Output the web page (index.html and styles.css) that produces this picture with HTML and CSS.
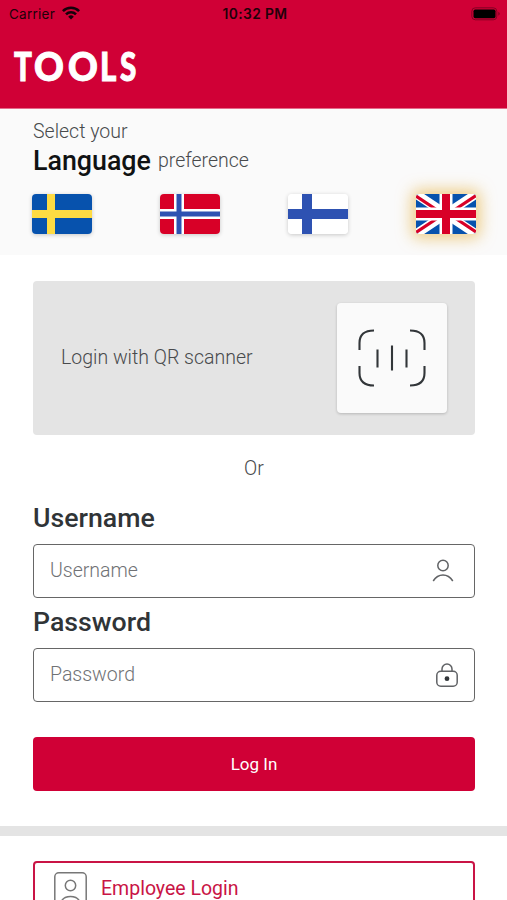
FILE: index.html
```html
<!DOCTYPE html>
<html lang="en">
<head>
<meta charset="utf-8">
<title>TOOLS Login</title>
<link rel="stylesheet" href="styles.css">
</head>
<body>
<header class="header">
  <div class="status">
    <span class="carrier">Carrier
      <svg width="18" height="14" viewBox="0 0 18 14"><g fill="none" stroke="#16000a" stroke-width="2.6"><path d="M.9 5.1a11.5 11.5 0 0 1 16.2 0"/><path d="M4 8.4a7 7 0 0 1 10 0"/></g><path d="M9 13.5 6.2 10.7a4 4 0 0 1 5.6 0z" fill="#16000a"/></svg>
    </span>
    <span class="time">10:32 PM</span>
    <svg class="battery" width="30" height="14" viewBox="0 0 30 14"><rect x=".8" y=".8" width="25" height="12" rx="3.5" fill="none" stroke="#830024"/><rect x="2.5" y="2.5" width="22" height="8.8" rx="1.7" fill="#000"/><path d="M27.3 4.8q3 2 0 4z" fill="#830024"/></svg>
  </div>
  <h1 class="logo"><span class="t">T</span><span class="o">O</span><span class="o">O</span><span class="l">L</span><span class="s">S</span></h1>
</header>
<section class="language">
  <p class="select">Select your</p>
  <p class="preference"><strong>Language</strong><span>preference</span></p>
  <div class="flags">
    <svg class="flag" viewBox="0 0 60 40"><path fill="#0752ad" d="M0 0h60v40H0z"/><path fill="#fedb43" d="M15 0h8v40h-8zM0 16h60v8H0z"/></svg>
    <svg class="flag" viewBox="0 0 60 40"><path fill="#d80027" d="M0 0h60v40H0z"/><path fill="#fff" d="M14 0h10v40H14zM0 15h60v10H0z"/><path fill="#2e52b2" d="M16.5 0h5v40h-5zM0 17.5h60v5H0z"/></svg>
    <svg class="flag" viewBox="0 0 60 40"><path fill="#fff" d="M0 0h60v40H0z"/><path fill="#2e52b2" d="M14 0h10v40H14zM0 15h60v10H0z"/></svg>
    <svg class="flag selected" viewBox="0 0 60 40"><path fill="#0752ad" d="M0 0h60v40H0z"/><path stroke="#fff" stroke-width="9" d="m0 0 60 40M60 0 0 40"/><path stroke="#d80027" stroke-width="3.2" d="m0 2 27 18M60 1.500 33 19.500M0 38.500l27-18M60 38 33 20"/><path fill="#fff" d="M23.500 0h13v40h-13zM0 13.500h60v13H0z"/><path fill="#d80027" d="M26 0h8v40h-8zM0 16h60v8H0z"/></svg>
  </div>
</section>
<main class="login">
  <button class="scanner">
    <span class="scan-label">Login with QR scanner</span>
    <span class="scan-card"><svg width="68" height="58" viewBox="0 0 68 58" fill="none" stroke="#323639" stroke-width="2.1"><path d="M1.500 21V14Q1.500 1.500 16 1.500M52 1.500Q66.500 1.500 66.500 14V21M1.500 37V44Q1.500 56.500 16 56.500M52 56.500Q66.500 56.500 66.500 44V37"/><path d="M19.500 20.500v18M34 16.500v25M48.500 20.500v18"/></svg></span>
  </button>
  <p class="or">Or</p>
  <form class="form">
    <label for="username">Username</label>
    <div class="field"><input id="username" placeholder="Username"><svg class="user" width="22" height="24" viewBox="0 0 22 24"><circle cx="11" cy="6.500" r="5.200"/><path d="M1.200 22Q5 16 11 16t9.800 6"/></svg></div>
    <label for="password">Password</label>
    <div class="field"><input id="password" type="password" placeholder="Password"><svg class="lock" width="22" height="24" viewBox="0 0 22 24"><rect x=".8" y="8.300" width="20.400" height="14.900" rx="4"/><path d="M6 8V6a5 5 0 0 1 10 0v2"/><circle class="keyhole" cx="11" cy="15.700" r="2.400"/></svg></div>
    <button class="submit" type="button">Log In</button>
  </form>
</main>
<section class="employee">
  <button class="employee-button"><svg width="33" height="42" viewBox="0 0 33 42"><rect x=".8" y=".8" width="31.400" height="40" rx="4"/><circle cx="16.500" cy="13.500" r="5.200"/><path d="M7.500 29Q10 24.500 16.500 24.500T25.500 29"/></svg><span>Employee Login</span></button>
</section>
</body>
</html>
```
FILE: styles.css
```css
* { box-sizing: border-box; }
html { overflow: hidden; }
body { margin: 0; height: 900px; overflow: hidden; background: #fff; color: #484a4c; font-family: Roboto, sans-serif; font-weight: 300; }
p, h1 { margin: 0; }
button, input { font: inherit; }
svg { display: block; flex: none; }
.header { height: 109px; background: #d00036; border-bottom: 1px solid #e46a8b; }
.status { height: 28px; padding: 0 6px 0 9px; display: grid; grid-template-columns: 1fr auto 1fr; align-items: center; color: #210009; font-family: Inter, sans-serif; font-size: 13px; }
.carrier { display: flex; gap: 7px; align-items: center; font-weight: 400; font-size: 13.500px; letter-spacing: .25px; }
.carrier svg { margin-top: -2px; }
.time { font-weight: 600; font-size: 13.800px; letter-spacing: .4px; }
.battery { justify-self: end; }
.logo { display: flex; height: 60px; padding: 0 0 0 14px; align-items: center; color: #fff; font: 900 40px/60px Lato, sans-serif; margin-top: 8px; -webkit-text-stroke: 1px #fff; }
.logo span { display: block; white-space: nowrap; }
.t { width: 20px; transform: scaleX(.74); transform-origin: left; }
.o { width: 33.500px; transform: scaleX(.92); transform-origin: left; }
.l { width: 19px; transform: scaleX(.78); transform-origin: left; margin-left: -1px; }
.s { transform: scaleX(.74); transform-origin: left; margin-left: 1px; }
.language { height: 146px; padding: 10px 31px 0 32px; background: #fafafa; }
.select { font-size: 19.500px; line-height: 26px; padding-left: 1px; }
.preference { display: flex; height: 32px; gap: 7px; padding-left: 1px; line-height: 32px; }
.preference strong { color: #101213; font-size: 26.800px; font-weight: 500; }
.preference span { font-size: 19.500px; }
.flags { display: flex; justify-content: space-between; margin-top: 17px; }
.flag { width: 60px; height: 40px; border-radius: 4px; box-shadow: 0 1px 4px #0003; }
.flag.selected { border-radius: 3px; box-shadow: 0 0 15px 4px #e4a82890; }
.login { height: 571px; padding: 26px 32px 0 33px; }
.scanner { width: 100%; height: 154px; border: 0; border-radius: 4px; background: #e4e4e4; display: flex; align-items: center; justify-content: space-between; padding: 0 28px; color: #484a4c; font-size: 19.500px; }
.scan-label { margin-top: -1px; }
.scan-card { width: 110px; height: 110px; background: #fafafa; border-radius: 4px; box-shadow: 0 1px 3px #0003; display: grid; place-items: center; }
.or { height: 68px; line-height: 68px; text-align: center; font-size: 19.500px; }
.form label { display: block; height: 41px; line-height: 31px; color: #303437; font-size: 26.700px; font-weight: 500; }
.field { height: 54px; border: 1px solid #666; border-radius: 4px; display: flex; align-items: center; padding: 0 16px; margin-bottom: 9px; }
.field input { flex: 1; min-width: 0; border: 0; outline: 0; padding: 0 0 1px; background: transparent; font-size: 19.500px; }
.field input::placeholder { color: #707275; opacity: 1; }
.field svg { fill: none; stroke: #606265; stroke-width: 1.5; }
.field .user { margin-right: 4px; }
.field svg .keyhole { fill: #323639; stroke: none; }
.submit { width: 100%; height: 54px; margin-top: 26px; padding: 0 0 1px; border: 0; border-radius: 4px; background: #d00036; color: #fff; font-size: 17px; font-weight: 400; }
.employee { border-top: 10px solid #e4e4e4; padding: 25px 32px 0 33px; }
.employee-button { width: 100%; height: 64px; border: 2px solid #c91445; border-radius: 4px; background: #fff; display: flex; align-items: center; gap: 14px; padding: 0 19px; color: #c91445; font-size: 19.500px; font-weight: 400; }
.employee-button svg { fill: none; stroke: #777; stroke-width: 1.5; }
.employee-button span { margin-top: -10px; }
```
